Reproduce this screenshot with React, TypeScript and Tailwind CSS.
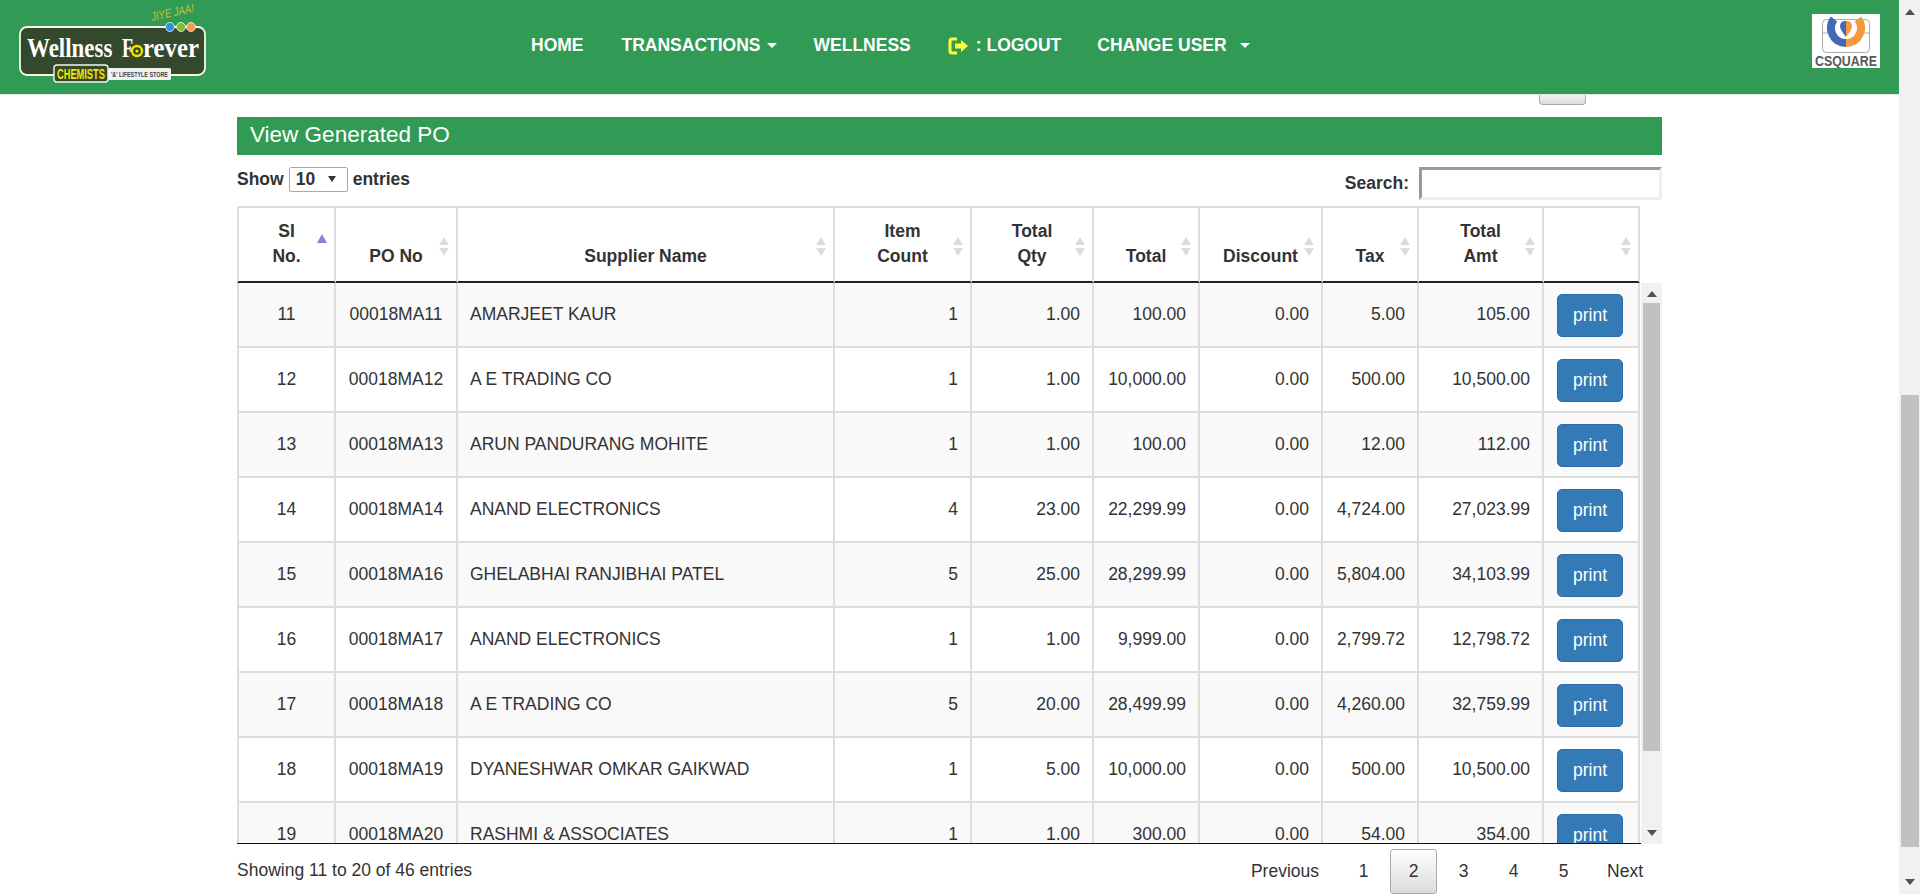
const rows = [
  { si: 11, po: '00018MA11', name: 'AMARJEET KAUR', count: 1, qty: '1.00', total: '100.00', discount: '0.00', tax: '5.00', amt: '105.00' },
  { si: 12, po: '00018MA12', name: 'A E TRADING CO', count: 1, qty: '1.00', total: '10,000.00', discount: '0.00', tax: '500.00', amt: '10,500.00' },
  { si: 13, po: '00018MA13', name: 'ARUN PANDURANG MOHITE', count: 1, qty: '1.00', total: '100.00', discount: '0.00', tax: '12.00', amt: '112.00' },
  { si: 14, po: '00018MA14', name: 'ANAND ELECTRONICS', count: 4, qty: '23.00', total: '22,299.99', discount: '0.00', tax: '4,724.00', amt: '27,023.99' },
  { si: 15, po: '00018MA16', name: 'GHELABHAI RANJIBHAI PATEL', count: 5, qty: '25.00', total: '28,299.99', discount: '0.00', tax: '5,804.00', amt: '34,103.99' },
  { si: 16, po: '00018MA17', name: 'ANAND ELECTRONICS', count: 1, qty: '1.00', total: '9,999.00', discount: '0.00', tax: '2,799.72', amt: '12,798.72' },
  { si: 17, po: '00018MA18', name: 'A E TRADING CO', count: 5, qty: '20.00', total: '28,499.99', discount: '0.00', tax: '4,260.00', amt: '32,759.99' },
  { si: 18, po: '00018MA19', name: 'DYANESHWAR OMKAR GAIKWAD', count: 1, qty: '5.00', total: '10,000.00', discount: '0.00', tax: '500.00', amt: '10,500.00' },
  { si: 19, po: '00018MA20', name: 'RASHMI & ASSOCIATES', count: 1, qty: '1.00', total: '300.00', discount: '0.00', tax: '54.00', amt: '354.00' },
]

function Cols() {
  return (
    <colgroup>
      <col className="w-[99px]" />
      <col className="w-[122px]" />
      <col className="w-[377px]" />
      <col className="w-[137px]" />
      <col className="w-[122px]" />
      <col className="w-[106px]" />
      <col className="w-[123px]" />
      <col className="w-[96px]" />
      <col className="w-[125px]" />
      <col className="w-[96px]" />
    </colgroup>
  )
}

function SortIcon({ active }: { active?: boolean }) {
  if (active) {
    return (
      <svg className="absolute right-[7px] top-[26px]" width="10" height="9" viewBox="0 0 10 9">
        <path d="M5 0l5 9H0z" fill="#8484d8" />
      </svg>
    )
  }
  return (
    <svg className="absolute right-[7px] top-[29px]" width="10" height="19" viewBox="0 0 10 19">
      <path d="M5 0l5 8H0zM5 19l5-8H0z" fill="#dcdcdc" />
    </svg>
  )
}

function Th({ children, active, first }: { children?: React.ReactNode; active?: boolean; first?: boolean }) {
  return (
    <th
      className={`relative border-t-2 border-r-2 border-b-2 border-t-[#ddd] border-r-[#ddd] border-b-[#222] h-[77px] pb-[12px] align-bottom text-center font-bold leading-[25px] text-[17.500px] text-[#333] ${first ? 'border-l-2 border-l-[#ddd]' : ''}`}
    >
      {children}
      <SortIcon active={active} />
    </th>
  )
}

function Td({ children, right, center, first }: { children?: React.ReactNode; right?: boolean; center?: boolean; first?: boolean }) {
  return (
    <td
      className={`border-r-2 border-b-2 border-[#ddd] px-[12px] align-middle text-[17.500px] text-[#333] ${right ? 'text-right' : center ? 'text-center' : 'text-left'} ${first ? 'border-l-2' : ''}`}
    >
      {children}
    </td>
  )
}

function Arrow({ down, className }: { down?: boolean; className?: string }) {
  return (
    <svg className={className} width="10" height="6" viewBox="0 0 10 6">
      <path d={down ? 'M0 0h10L5 6z' : 'M5 0l5 6H0z'} fill="#505050" />
    </svg>
  )
}

function WellnessLogo() {
  return (
    <svg width="220" height="94" viewBox="0 0 220 94" className="shrink-0">
      <text fontFamily="'Liberation Sans', sans-serif" fontStyle="italic" fontSize="11" fill="#c4c42a" transform="translate(152 21) rotate(-12) scale(0.88 1.1)">
        JIYE JAA!
      </text>
      <rect x="20" y="27" width="185" height="48" rx="7" fill="#34482b" stroke="#f4f8e8" strokeWidth="1.8" />
      <text fontFamily="'Liberation Serif', serif" fontWeight="700" fontSize="27" fill="#fff" transform="translate(27 57) scale(0.85 1)">
        Wellness
      </text>
      <text fontFamily="'Liberation Serif', serif" fontWeight="700" fontSize="27" fill="#fff" transform="translate(122 57) scale(0.68 1)">
        F
      </text>
      <circle cx="137" cy="51" r="5" fill="#34482b" stroke="#f2e400" strokeWidth="2.4" />
      <circle cx="137" cy="51" r="1.6" fill="#f2e400" />
      <text fontFamily="'Liberation Serif', serif" fontWeight="700" fontSize="27" fill="#fff" transform="translate(143 57) scale(0.92 1)">
        rever
      </text>
      <circle cx="170" cy="27" r="4.500" fill="#2f8fd8" stroke="#f4f8e8" strokeWidth="0.8" />
      <circle cx="181" cy="27" r="4.500" fill="#8cb83a" stroke="#f4f8e8" strokeWidth="0.8" />
      <circle cx="191" cy="27" r="4.500" fill="#f59b4c" stroke="#f4f8e8" strokeWidth="0.8" />
      <rect x="108" y="68" width="63" height="12" rx="1.500" fill="#f2f2f2" />
      <text fontFamily="'Liberation Sans', sans-serif" fontWeight="700" fontSize="7.500" fill="#444" transform="translate(111 77) scale(0.72 1)">
        '&' LIFESTYLE STORE
      </text>
      <rect x="54" y="65" width="54" height="17" rx="3" fill="#34482b" stroke="#f4f8e8" strokeWidth="1.400" />
      <text fontFamily="'Liberation Sans', sans-serif" fontWeight="700" fontSize="14.500" fill="#f5e600" transform="translate(57 79) scale(0.64 1)">
        CHEMISTS
      </text>
    </svg>
  )
}

function CsquareLogo() {
  return (
    <div className="w-[68px] h-[54px] bg-white shrink-0">
      <svg width="68" height="54" viewBox="0 0 68 54">
        <rect x="10.500" y="5.500" width="47" height="33" rx="4" fill="none" stroke="#aaa" strokeWidth="1" />
        <path d="M11 19h5M52 19h5" stroke="#aaa" strokeWidth="1" />
        <path d="M22 5A15 15 0 0 0 34 29" fill="none" stroke="#4369b5" strokeWidth="8" />
        <path d="M34 7a5 5 0 0 0-6 5c0 3 2 5 3 7l3 4z" fill="#4369b5" />
        <path d="M46 5A15 15 0 0 1 34 29" fill="none" stroke="#f59a3c" strokeWidth="8" />
        <path d="M34 7a5 5 0 0 1 6 5c0 3-2 5-3 7l-3 4z" fill="#f59a3c" />
        <text fontFamily="'Liberation Sans', sans-serif" fontWeight="700" fontSize="14" fill="#595959" transform="translate(3 52) scale(0.886 1)">
          CSQUARE
        </text>
      </svg>
    </div>
  )
}

export default function App() {
  return (
    <div className="flex h-screen overflow-hidden bg-white font-['Liberation_Sans',Arial,sans-serif] text-[#333]">
      <div className="flex-1 min-w-0">
        <header className="flex items-center h-[95px] bg-[#319a54] border-b border-[#e7e7e7]">
          <WellnessLogo />
          <nav className="flex items-center flex-1 pl-[311px] pb-[3px] text-[17.500px] font-bold text-white">
            <span>HOME</span>
            <span className="ml-[38px]">TRANSACTIONS</span>
            <span className="ml-[6px] w-0 h-0 border-x-[5px] border-x-transparent border-t-[5px] border-t-white" />
            <span className="ml-[37px]">WELLNESS</span>
            <svg className="ml-[37px]" width="21" height="18" viewBox="0 0 21 18">
              <path d="M9 2H4Q2 2 2 4v10q0 2 2 2h5" fill="none" stroke="#ffff33" strokeWidth="3" />
              <path d="M7 6.500h6V3l7 6-7 6v-3.500H7z" fill="#ffff33" />
            </svg>
            <span className="ml-[7px]">: LOGOUT</span>
            <span className="ml-[36px]">CHANGE USER</span>
            <span className="ml-[13px] w-0 h-0 border-x-[5px] border-x-transparent border-t-[5px] border-t-white" />
          </nav>
          <div className="pr-[19px] pb-[13px]">
            <CsquareLogo />
          </div>
        </header>

        <div className="mx-auto w-[1425px]">
          <div className="flex justify-end h-[22px] pr-[76px]">
            <div className="w-[47px] h-[10px] rounded-b-[4px] border border-t-0 border-[#aaa] bg-gradient-to-b from-[#f2f2f2] to-[#dcdcdc]" />
          </div>

          <h2 className="h-[38px] pl-[13px] bg-[#319a54] text-white text-[22.500px] leading-[36px]">View Generated PO</h2>

          <div className="flex justify-between items-start h-[51px] pt-[12px] text-[17.500px] font-bold">
            <div className="flex items-center h-[24px]">
              Show
              <div className="flex items-center justify-between mx-[5px] w-[59px] h-[25px] pl-[6px] pr-[11px] rounded-[2px] border border-[#a9a9a9]">
                10
                <svg width="8" height="6" viewBox="0 0 8 6">
                  <path d="M0 0h8L4 6z" fill="#333" />
                </svg>
              </div>
              entries
            </div>
            <label className="flex items-center">
              Search:
              <input className="ml-[10px] w-[243px] h-[33px] border-[3px] border-t-[#999] border-l-[#999] border-r-[#eee] border-b-[#eee] bg-white" />
            </label>
          </div>

          <table className="w-[1403px] table-fixed border-separate border-spacing-0">
            <Cols />
            <thead>
              <tr>
                <Th first active>SI<br />No.</Th>
                <Th>PO No</Th>
                <Th>Supplier Name</Th>
                <Th>Item<br />Count</Th>
                <Th>Total<br />Qty</Th>
                <Th>Total</Th>
                <Th>Discount</Th>
                <Th>Tax</Th>
                <Th>Total<br />Amt</Th>
                <Th />
              </tr>
            </thead>
          </table>

          <div className="flex h-[561px]">
            <div className="w-[1404px] h-[561px] overflow-hidden border-b border-[#111]">
              <table className="w-[1403px] table-fixed border-separate border-spacing-0">
                <Cols />
                <tbody>
                  {rows.map((r, i) => (
                    <tr key={r.si} className={`h-[65px] ${i % 2 === 0 ? 'bg-[#f9f9f9]' : 'bg-white'}`}>
                      <Td first center>{r.si}</Td>
                      <Td center>{r.po}</Td>
                      <Td>{r.name}</Td>
                      <Td right>{r.count}</Td>
                      <Td right>{r.qty}</Td>
                      <Td right>{r.total}</Td>
                      <Td right>{r.discount}</Td>
                      <Td right>{r.tax}</Td>
                      <Td right>{r.amt}</Td>
                      <td className="border-r-2 border-b-2 border-[#ddd] align-middle">
                        <button className="block mt-[2px] ml-[13px] w-[66px] h-[43px] rounded-[5px] border border-[#2e6da4] bg-[#337ab7] text-white text-[17.500px]">
                          print
                        </button>
                      </td>
                    </tr>
                  ))}
                </tbody>
              </table>
            </div>
            <div className="flex flex-col items-center w-[21px] h-[561px] bg-[#f1f1f1]">
              <Arrow className="mt-[8px]" />
              <div className="mt-[6px] w-[17px] h-[448px] bg-[#c1c1c1]" />
              <div className="flex-1" />
              <Arrow down className="mb-[8px]" />
            </div>
          </div>

          <div className="flex justify-between items-center h-[50px] text-[17.500px]">
            <span className="pt-[3px]">Showing 11 to 20 of 46 entries</span>
            <div className="flex items-center gap-[3px] pr-[19px] pt-[5px] leading-[43px]">
              <span className="pr-[18px]">Previous</span>
              <span className="w-[47px] text-center">1</span>
              <span className="w-[47px] h-[45px] text-center rounded-[3px] border border-[#aaa] bg-gradient-to-b from-[#fefefe] to-[#dcdcdc]">2</span>
              <span className="w-[47px] text-center">3</span>
              <span className="w-[47px] text-center">4</span>
              <span className="w-[47px] text-center">5</span>
              <span className="pl-[17px]">Next</span>
            </div>
          </div>
        </div>
      </div>

      <div className="flex flex-col items-center w-[21px] h-screen shrink-0 bg-[#f1f1f1]">
        <Arrow className="mt-[9px]" />
        <div className="mt-[380px] w-[18px] h-[452px] bg-[#c1c1c1]" />
        <div className="flex-1" />
        <Arrow down className="mb-[9px]" />
      </div>
    </div>
  )
}
